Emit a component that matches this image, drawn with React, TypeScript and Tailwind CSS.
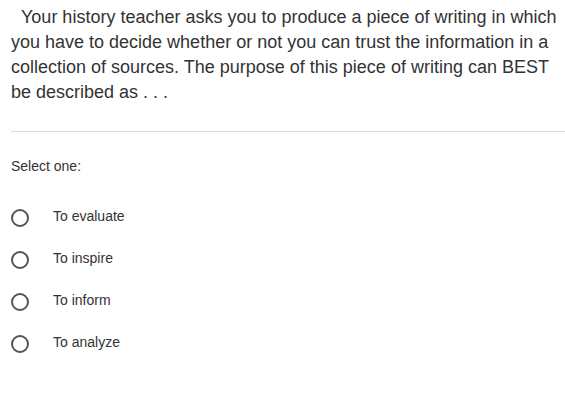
import React from "react";

const options = ["To evaluate", "To inspire", "To inform", "To analyze"];

export default function App() {
  return (
    <div className="w-[565px] h-[407px] bg-white text-[#333] font-['Liberation_Sans',Arial,sans-serif] pl-[11px] pt-[5px] overflow-hidden">
      <p className="text-[18px] leading-[25px] pr-[4px]">
        &nbsp;&nbsp;Your history teacher asks you to produce a piece of writing in which you have to decide whether or not you can trust the information in a collection of sources. The purpose of this piece of writing can BEST be described as . . .
      </p>
      <hr className="mt-[26px] border-t border-[#dcdcdc]" />
      <div className="mt-[24px] text-[14px] leading-[20px]">Select one:</div>
      <div className="mt-[33px] flex flex-col gap-[24px]">
        {options.map((o) => (
          <label key={o} className="flex items-start h-[18px]">
            <span className="w-[18px] h-[18px] rounded-full border-2 border-[#555] shrink-0" />
            <span className="ml-[24px] text-[14px] leading-[16px] -mt-[1px]">{o}</span>
          </label>
        ))}
      </div>
    </div>
  );
}
